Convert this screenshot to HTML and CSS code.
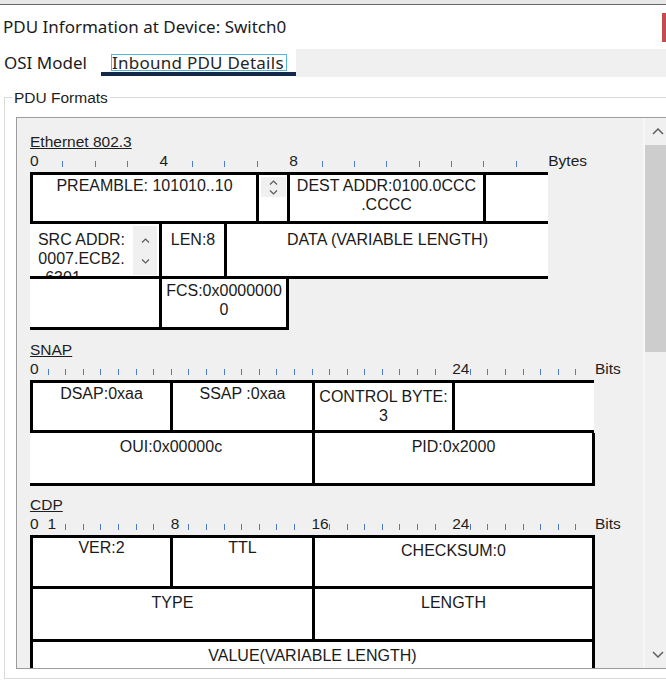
FILE: index.html
```html
<!DOCTYPE html>
<html lang="en">
<head>
<meta charset="utf-8">
<title>PDU Information at Device: Switch0</title>
<link rel="stylesheet" href="styles.css">
</head>
<body>
<div class="topstrip"></div>
<div class="titlebar">
  <span class="title">PDU Information at Device: Switch0</span>
  <span class="close"></span>
</div>
<div class="tabs">
  <div class="tab tab-osi">OSI Model</div>
  <div class="tab tab-active"><span class="tab-label">Inbound PDU Details</span></div>
  <div class="tab-fill"></div>
</div>
<fieldset class="group">
  <legend>PDU Formats</legend>
  <div class="panel">
    <div class="pdu-area">

      <section class="fmt">
        <div class="fmt-name">Ethernet 802.3</div>
        <div class="ruler ruler-bytes">
          <span class="num">0</span><i class="tick"></i><i class="tick"></i><i class="tick"></i>
          <span class="num">4</span><i class="tick"></i><i class="tick"></i><i class="tick"></i>
          <span class="num">8</span><i class="tick"></i><i class="tick"></i><i class="tick"></i><i class="tick"></i><i class="tick"></i><i class="tick"></i><i class="tick"></i>
          <span class="unit">Bytes</span>
        </div>
        <div class="row row-first row-lb r46 pt1">
          <div class="cell w226">PREAMBLE: 101010..10</div>
          <div class="cell w31 cell-pscroll">
            <div class="mini-sb">
              <svg class="chev" width="9" height="5" viewBox="0 0 9 5"><polyline points="1,4.5 4.5,1 8,4.5"/></svg>
              <svg class="chev" width="9" height="5" viewBox="0 0 9 5"><polyline points="1,0.5 4.5,4 8,0.5"/></svg>
            </div>
          </div>
          <div class="cell w196">DEST ADDR:0100.0CCC<br>.CCCC</div>
          <div class="cell w62 cell-open"></div>
        </div>
        <div class="row r52 pt6">
          <div class="cell w132 cell-src">
            <div class="src-text">SRC ADDR:<br>0007.ECB2.<br><span class="src-cut">6301</span></div>
            <div class="src-sb">
              <svg class="chev" width="9" height="5" viewBox="0 0 9 5"><polyline points="1,4.5 4.5,1 8,4.5"/></svg>
              <svg class="chev" width="9" height="5" viewBox="0 0 9 5"><polyline points="1,0.5 4.5,4 8,0.5"/></svg>
            </div>
          </div>
          <div class="cell w65">LEN:8</div>
          <div class="cell w321 cell-open">DATA (VARIABLE LENGTH)</div>
        </div>
        <div class="row r48 pt2">
          <div class="cell w132"></div>
          <div class="cell w127">FCS:0x0000000<br>0</div>
        </div>
      </section>

      <section class="fmt fmt-snap">
        <div class="fmt-name">SNAP</div>
        <div class="ruler ruler-bits">
          <span class="num">0</span>
          <i class="tick"></i><i class="tick"></i><i class="tick"></i><i class="tick"></i><i class="tick"></i><i class="tick"></i><i class="tick"></i><i class="tick"></i>
          <i class="tick"></i><i class="tick"></i><i class="tick"></i><i class="tick"></i><i class="tick"></i><i class="tick"></i><i class="tick"></i><i class="tick"></i>
          <i class="tick"></i><i class="tick"></i><i class="tick"></i><i class="tick"></i><i class="tick"></i><i class="tick"></i><i class="tick"></i>
          <span class="num">24</span>
          <i class="tick"></i><i class="tick"></i><i class="tick"></i><i class="tick"></i><i class="tick"></i><i class="tick"></i><i class="tick"></i>
          <span class="unit unit-bits">Bits</span>
        </div>
        <div class="row row-first row-lb r47 pt1">
          <div class="cell w140">DSAP:0xaa</div>
          <div class="cell w142">SSAP :0xaa</div>
          <div class="cell w140 low4">CONTROL BYTE: 3</div>
          <div class="cell w139 cell-open"></div>
        </div>
        <div class="row r50 pt4">
          <div class="cell w285">OUI:0x00000c</div>
          <div class="cell w280">PID:0x2000</div>
        </div>
      </section>

      <section class="fmt fmt-cdp">
        <div class="fmt-name">CDP</div>
        <div class="ruler ruler-bits">
          <span class="num">0</span><span class="num">1</span>
          <i class="tick"></i><i class="tick"></i><i class="tick"></i><i class="tick"></i><i class="tick"></i><i class="tick"></i>
          <span class="num">8</span>
          <i class="tick"></i><i class="tick"></i><i class="tick"></i><i class="tick"></i><i class="tick"></i><i class="tick"></i><i class="tick"></i>
          <span class="num">16</span>
          <i class="tick"></i><i class="tick"></i><i class="tick"></i><i class="tick"></i><i class="tick"></i><i class="tick"></i><i class="tick"></i>
          <span class="num">24</span>
          <i class="tick"></i><i class="tick"></i><i class="tick"></i><i class="tick"></i><i class="tick"></i><i class="tick"></i><i class="tick"></i>
          <span class="unit unit-bits">Bits</span>
        </div>
        <div class="row row-first row-lb r48 pt0">
          <div class="cell w140">VER:2</div>
          <div class="cell w142">TTL</div>
          <div class="cell w280 low3">CHECKSUM:0</div>
        </div>
        <div class="row row-lb r50 pt4">
          <div class="cell w282">TYPE</div>
          <div class="cell w280">LENGTH</div>
        </div>
        <div class="row row-lb r50 pt4">
          <div class="cell w562">VALUE(VARIABLE LENGTH)</div>
        </div>
      </section>

    </div>
    <div class="vscroll">
      <div class="vs-btn">
        <svg class="chev-lg" width="12" height="7" viewBox="0 0 12 7"><polyline points="1,6 6,1 11,6"/></svg>
      </div>
      <div class="vs-thumb"></div>
      <div class="vs-track"></div>
      <div class="vs-btn">
        <svg class="chev-lg" width="12" height="7" viewBox="0 0 12 7"><polyline points="1,1 6,6 11,1"/></svg>
      </div>
    </div>
  </div>
</fieldset>
</body>
</html>
```

FILE: styles.css
```css
html, body {
  margin: 0;
  padding: 0;
  overflow: hidden;
  background: #ffffff;
}

body {
  width: 666px;
  height: 684px;
  font-family: "Noto Sans", "Open Sans", sans-serif;
  color: #1b1b1b;
}

.topstrip {
  height: 4px;
  background: #e7e7e7;
  border-bottom: 1px solid #676767;
}

.titlebar {
  height: 44px;
  display: flex;
  align-items: center;
  justify-content: space-between;
  padding-left: 3px;
}

.title {
  font-size: 17px;
  line-height: 44px;
  color: #1b1b1b;
  white-space: nowrap;
}

.close {
  width: 20px;
  height: 29px;
  background: #c44c4c;
  margin-right: -16px;
  flex: none;
}

.tabs {
  display: flex;
  height: 28px;
}

.tab {
  font-size: 17px;
  color: #1b1b1b;
  box-sizing: border-box;
  white-space: nowrap;
}

.tab-osi {
  width: 101px;
  padding-left: 4px;
  line-height: 27px;
}

.tab-active {
  width: 195px;
  height: 27px;
  padding: 5px 0 0 10px;
  border-bottom: 4px solid #14284a;
}

.tab-label {
  display: block;
  width: max-content;
  border: 1px solid #55b6d4;
  line-height: 15px;
  letter-spacing: 0.25px;
  padding-right: 2px;
  color: #262626;
}

.tab-fill {
  flex: 1;
  height: 28px;
  background: #f0f0f0;
}

.group {
  margin: 12px -40px 0 4px;
  padding: 0 0 9px 0;
  border: 1px solid #dadada;
  min-width: 0;
}

.group legend {
  margin-left: 7px;
  padding: 0 2px;
  font: 15.5px/17px "Liberation Sans", Arial, sans-serif;
  color: #1e1e1e;
}

.panel {
  display: flex;
  width: max-content;
  height: 550px;
  margin: 11px 0 0 11px;
  border: 1px solid #9c9c9c;
  background: #f0f0f0;
}

.pdu-area {
  width: 626px;
  box-sizing: border-box;
  padding: 14px 0 0 13px;
  overflow: hidden;
  display: flex;
  flex-direction: column;
  align-items: flex-start;
}

.fmt {
  display: flex;
  flex-direction: column;
  align-items: flex-start;
}

.fmt-snap { margin-top: 10px; }
.fmt-cdp { margin-top: 9px; }

.fmt-name {
  font: 15.5px/20px "Liberation Sans", Arial, sans-serif;
  color: #1e1e1e;
  text-decoration: underline;
  text-underline-offset: 1px;
}

.ruler {
  display: grid;
  height: 17px;
  margin-bottom: 3px;
  font: 15.5px/17px "Liberation Sans", Arial, sans-serif;
  color: #1e1e1e;
}

.ruler-bytes { grid-template-columns: repeat(16, 32.4px) auto; }
.ruler-bits { grid-template-columns: repeat(32, 17.6px) auto; }

.num {
  white-space: nowrap;
}

.tick {
  display: block;
  width: 0;
  height: 6px;
  border-left: 1px solid #4d7cc3;
  align-self: end;
  margin-bottom: 2px;
}

.unit { white-space: nowrap; }
.unit-bits { margin-left: 2px; }

.row {
  display: flex;
  border-bottom: 3px solid #000;
}

.row-first { border-top: 3px solid #000; }
.row-lb { border-left: 3px solid #000; }

.r46 { height: 46px; }
.r47 { height: 47px; }
.r48 { height: 48px; }
.r50 { height: 50px; }
.r52 { height: 52px; }

.cell {
  flex: none;
  box-sizing: border-box;
  background: #ffffff;
  border-right: 3px solid #000;
  font: 16px/19px "Liberation Sans", Arial, sans-serif;
  color: #1a1a1a;
  text-align: center;
  overflow: hidden;
}

.cell-open { border-right: 0; }

.pt0 > .cell { padding-top: 0; }
.pt1 > .cell { padding-top: 1px; }
.pt2 > .cell { padding-top: 2px; }
.pt4 > .cell { padding-top: 4px; }
.pt6 > .cell { padding-top: 6px; }

.row > .cell.low4 { padding-top: 4px; padding-left: 2px; padding-right: 2px; }
.row > .cell.low3 { padding-top: 3px; }

.w31 { width: 31px; }
.w62 { width: 62px; }
.w65 { width: 65px; }
.w127 { width: 127px; }
.w132 { width: 132px; }
.w139 { width: 139px; }
.w140 { width: 140px; }
.w142 { width: 142px; }
.w196 { width: 196px; }
.w226 { width: 226px; }
.w280 { width: 280px; }
.w282 { width: 282px; }
.w285 { width: 285px; }
.w321 { width: 321px; }
.w562 { width: 562px; }

.row > .cell.cell-pscroll {
  padding: 2px 0 0 2px;
}

.mini-sb {
  width: 25px;
  height: 20px;
  box-sizing: border-box;
  padding-top: 3px;
  background: #f0f0f0;
  display: flex;
  flex-direction: column;
  align-items: center;
  gap: 5px;
}

.chev {
  display: block;
  fill: none;
  stroke: #5a5a5a;
  stroke-width: 1.2;
}

.row > .cell.cell-src {
  display: flex;
  padding-top: 0;
}

.src-text {
  flex: 1;
  padding-top: 6px;
}

.src-cut {
  display: inline-block;
  padding-right: 37px;
}

.src-sb {
  width: 24px;
  margin: 2px 2px 1px 0;
  box-sizing: border-box;
  padding: 12px 0 11px;
  background: #f0f0f0;
  display: flex;
  flex-direction: column;
  align-items: center;
  justify-content: space-between;
}

.vscroll {
  width: 27px;
  box-sizing: border-box;
  border-left: 2px solid #f7f7f7;
  display: flex;
  flex-direction: column;
  background: #f0f0f0;
}

.vs-btn {
  height: 27px;
  display: flex;
  align-items: center;
  justify-content: center;
  flex: none;
}

.chev-lg {
  display: block;
  fill: none;
  stroke: #606060;
  stroke-width: 1.5;
}

.vs-thumb {
  height: 207px;
  background: #cdcdcd;
  flex: none;
}

.vs-track { flex: 1; }
```
